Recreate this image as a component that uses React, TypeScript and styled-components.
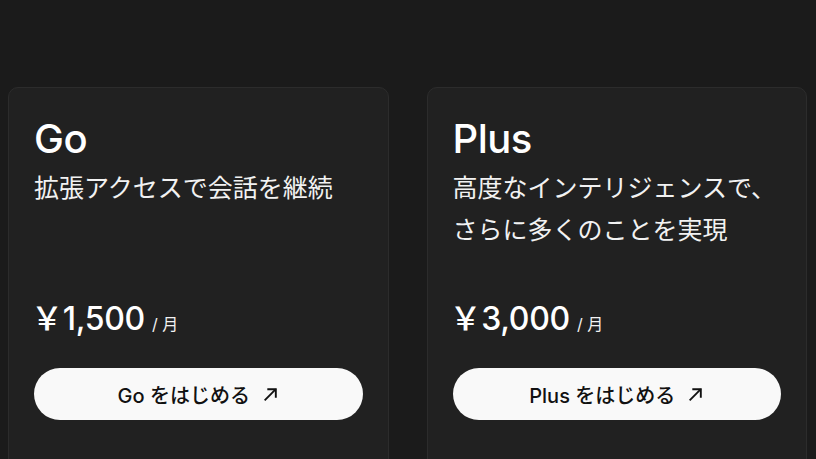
import styled, { createGlobalStyle } from 'styled-components';

const plans = [
  { name: 'Go', description: '拡張アクセスで会話を継続', price: '1,500' },
  { name: 'Plus', description: '高度なインテリジェンスで、\nさらに多くのことを実現', price: '3,000' },
];

const ArrowIcon = () => (
  <svg width="17" height="17" viewBox="0 0 16 16" fill="none" stroke="currentColor" strokeWidth="1.8" strokeLinecap="butt" strokeLinejoin="miter">
    <path d="M2.5 13.5L13 3" />
    <path d="M5 3h8v8" />
  </svg>
);

const App = () => {
  return (
    <>
      <GlobalStyle />
      <Page>
        {plans.map(plan => (
          <PlanCard key={plan.name}>
            <PlanName>{plan.name}</PlanName>
            <PlanDescription>{plan.description}</PlanDescription>
            <PriceRow>
              <PriceValue>￥{plan.price}</PriceValue>
              <PriceUnit>/ 月</PriceUnit>
            </PriceRow>
            <StartButton>
              {plan.name} をはじめる
              <ArrowIcon />
            </StartButton>
          </PlanCard>
        ))}
      </Page>
    </>
  );
};

const GlobalStyle = createGlobalStyle`
  html, body {
    margin: 0;
    background: #1b1b1b;
    overflow: hidden;
  }

  body {
    font-family: Inter, "Noto Sans CJK JP", sans-serif;
    color: #f5f5f5;
  }
`;

const Page = styled.div`
  display: grid;
  grid-template-columns: 1fr 1fr;
  gap: 38px;
  padding: 87px 9px 0 8px;
  height: 459px;
  box-sizing: border-box;
  overflow: hidden;
`;

const PlanCard = styled.div`
  display: flex;
  flex-direction: column;
  background: #212121;
  border: 1px solid #2c2c2c;
  border-radius: 10px;
  padding: 27px 25px 40px;
  min-height: 420px;
  box-sizing: border-box;
`;

const PlanName = styled.h2`
  margin: 0;
  font-size: 40px;
  line-height: 48px;
  font-weight: 500;
  letter-spacing: -0.5px;
  color: #ffffff;
`;

const PlanDescription = styled.p`
  margin: 4px 0 0;
  min-height: 84px;
  font-size: 25px;
  line-height: 42px;
  font-weight: 400;
  white-space: pre-line;
  color: #f2f2f2;
`;

const PriceRow = styled.div`
  display: flex;
  align-items: baseline;
  gap: 7px;
  margin-top: 48px;
  margin-left: -3px;
`;

const PriceValue = styled.span`
  font-size: 32px;
  line-height: 40px;
  font-weight: 500;
  letter-spacing: -0.3px;
  color: #ffffff;
`;

const PriceUnit = styled.span`
  font-size: 16px;
  font-weight: 400;
  color: #f2f2f2;
`;

const StartButton = styled.button`
  display: flex;
  align-items: center;
  justify-content: center;
  gap: 12px;
  margin-top: 29px;
  height: 52px;
  width: 100%;
  border: none;
  border-radius: 26px;
  background: #f9f9f9;
  color: #111111;
  font-family: inherit;
  font-size: 20px;
  font-weight: 500;
  cursor: pointer;
`;

export default App;
